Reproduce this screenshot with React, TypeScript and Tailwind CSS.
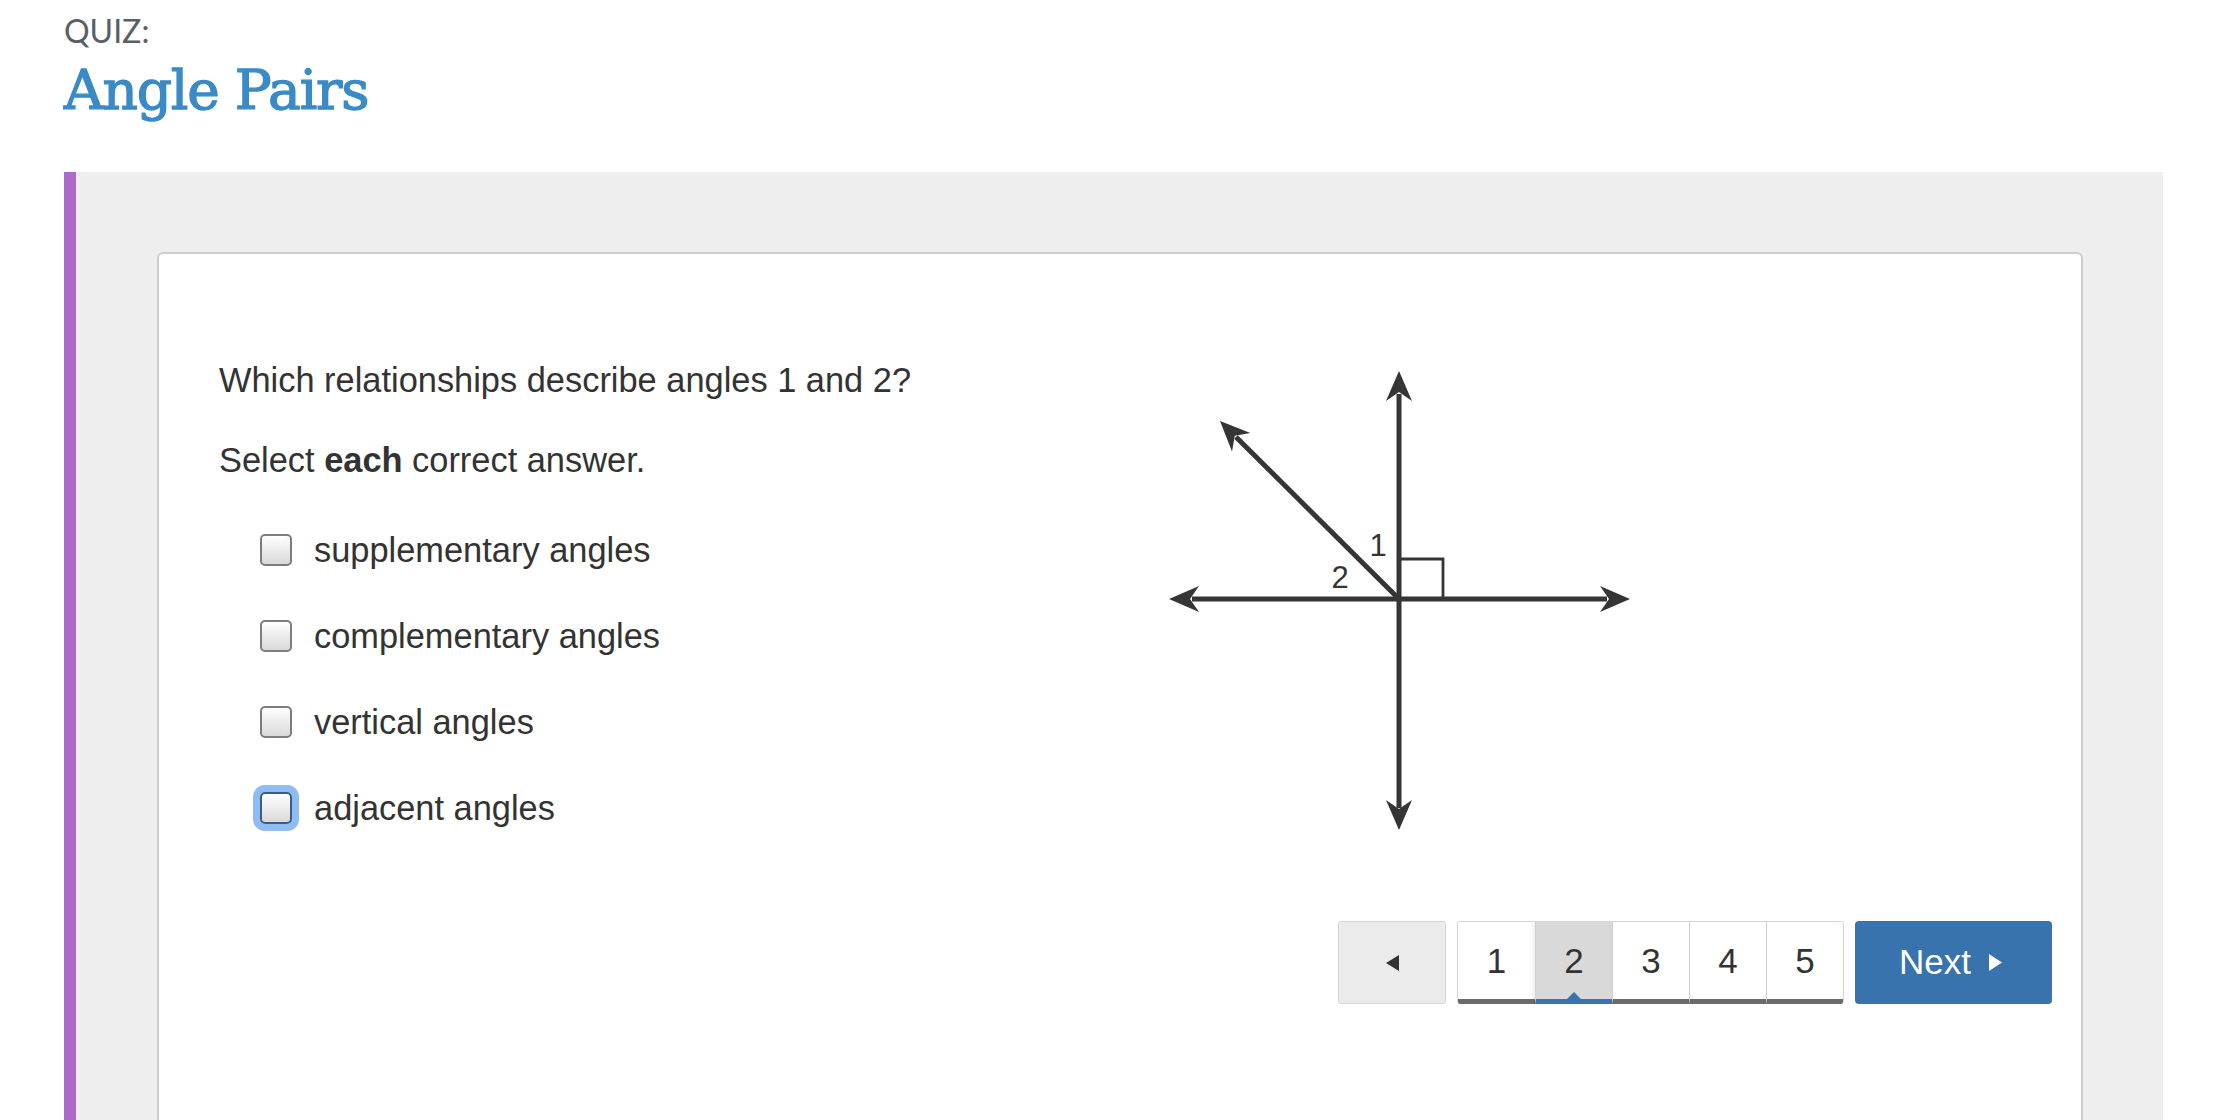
import React from 'react';

const answers = [
  { label: 'supplementary angles', focused: false },
  { label: 'complementary angles', focused: false },
  { label: 'vertical angles', focused: false },
  { label: 'adjacent angles', focused: true },
];

const pages = [1, 2, 3, 4, 5];

// diagram with arrows; coords are local to the svg box
const AngleDiagram = () => (
  <svg width="480" height="478" viewBox="0 0 480 478" className="mt-[2px] shrink-0">
    <g stroke="#353535" strokeWidth="5" strokeLinecap="butt" fill="none">
      <line x1="239" y1="32" x2="239" y2="446" />
      <line x1="32" y1="237" x2="447" y2="237" />
      <line x1="240" y1="238" x2="76" y2="75" />
    </g>
    <path d="M239 197 H283 V237" stroke="#353535" strokeWidth="2.8" fill="none" />
    <g fill="#353535">
      <polygon points="239,9 252,39 239,30 226,39" />
      <polygon points="239,468 252,438 239,447 226,438" />
      <polygon points="9,237 39,224 30,237 39,250" />
      <polygon points="470,237 440,224 449,237 440,250" />
      <polygon points="60,59 90.4,71 74.8,73.8 72,89.4" />
    </g>
    <text x="218" y="194" textAnchor="middle" fontFamily="Liberation Sans, Arial, sans-serif" fontSize="31" fill="#353535">1</text>
    <text x="180" y="226" textAnchor="middle" fontFamily="Liberation Sans, Arial, sans-serif" fontSize="31" fill="#353535">2</text>
  </svg>
);

const Checkbox = ({ focused }: { focused: boolean }) => (
  <span
    className={
      focused
        ? 'block w-[32px] h-[32px] rounded-[5px] border-2 border-[#3d5d80] bg-gradient-to-b from-white to-[#d9d9d9] shadow-[0_0_0_7px_#8ebcf3]'
        : 'block w-[32px] h-[32px] rounded-[5px] border-2 border-[#7d7d7d] bg-gradient-to-b from-white to-[#d9d9d9]'
    }
  />
);

export default function App() {
  return (
    <div className="w-[2224px] h-[1120px] overflow-hidden bg-white font-['Liberation_Sans',Arial,sans-serif] text-[#333333]">
      <div className="pl-[64px] pt-[15px]">
        <div className="font-['Lato',sans-serif] text-[32px] leading-[32px] text-[#5a5f66]">QUIZ:</div>
        <h1 className="mt-[11px] font-['DejaVu_Serif',serif] text-[55px] leading-[64px] text-[#3a8ac8] tracking-[-1.2px] [-webkit-text-stroke:1.3px_#3a8ac8]">
          Angle Pairs
        </h1>
      </div>

      <div className="ml-[64px] mt-[50px] w-[2099px] h-[960px] bg-[#eeeeee] border-l-[12px] border-[#ad6bc9] pt-[80px] pl-[81px] pr-[80px]">
        <div className="h-[1000px] bg-white border-2 border-[#cdcdcd] rounded-[6px] pt-[106px] pl-[60px] pr-[29px]">
          <div className="flex items-start">
            <div className="w-[941px] shrink-0 text-[34.4px] leading-[40px]">
              <p>Which relationships describe angles 1 and 2?</p>
              <p className="mt-[40px]">
                Select <span className="font-bold">each</span> correct answer.
              </p>
              <div className="mt-[50px] flex flex-col gap-[46px] pl-[41px]">
                {answers.map((a) => (
                  <label key={a.label} className="flex items-center gap-[22px] h-[40px]">
                    <Checkbox focused={a.focused} />
                    <span>{a.label}</span>
                  </label>
                ))}
              </div>
            </div>
            <AngleDiagram />
          </div>

          <div className="mt-[81px] flex justify-end gap-[11px]">
            <button className="w-[108px] h-[83px] flex items-center justify-center bg-[#ebebeb] border border-[#d6d6d6] rounded-[3px]">
              <svg width="13" height="16" viewBox="0 0 13 16">
                <polygon points="13,0 13,16 0,8" fill="#333333" />
              </svg>
            </button>
            <div className="flex h-[83px] rounded-[3px] border border-b-0 border-[#d6d6d6] overflow-hidden">
              {pages.map((n) => (
                <div
                  key={n}
                  className={
                    n === 2
                      ? 'relative w-[77px] flex items-center justify-center bg-[#d9d9d9] border-l border-[#d0d0d0] border-b-[5px] border-b-[#3874b0] shadow-[0_0_6px_rgba(0,0,0,0.15)] text-[35px]'
                      : n === 1
                        ? 'relative w-[77px] flex items-center justify-center bg-white border-b-[5px] border-b-[#6b6b6b] text-[35px]'
                        : 'relative w-[77px] flex items-center justify-center bg-white border-l border-[#d0d0d0] border-b-[5px] border-b-[#6b6b6b] text-[35px]'
                  }
                >
                  <span className="pt-[2px]">{n}</span>
                  {n === 2 && (
                    <span className="absolute bottom-0 left-1/2 -translate-x-1/2 w-0 h-0 border-l-[7px] border-r-[7px] border-b-[7px] border-l-transparent border-r-transparent border-b-[#3874b0]" />
                  )}
                </div>
              ))}
            </div>
            <button className="w-[197px] h-[83px] flex items-center justify-center gap-[18px] bg-[#3873ad] rounded-[4px] text-white text-[35px] pr-[6px]">
              <span>Next</span>
              <svg width="13" height="17" viewBox="0 0 13 17">
                <polygon points="0,0 13,8.5 0,17" fill="#ffffff" />
              </svg>
            </button>
          </div>
        </div>
      </div>
    </div>
  );
}
